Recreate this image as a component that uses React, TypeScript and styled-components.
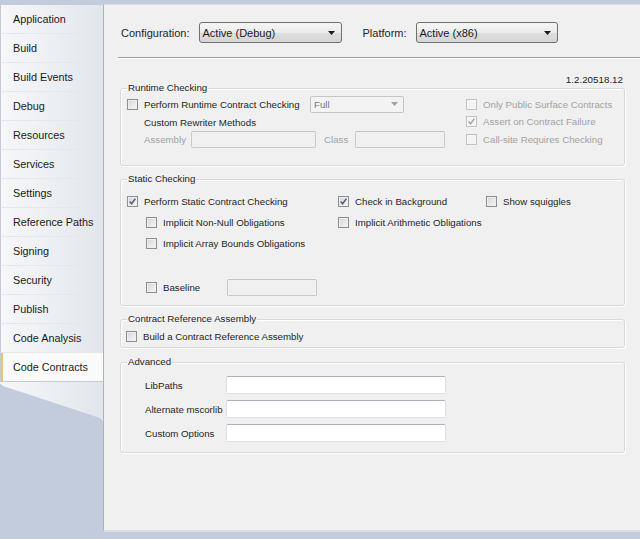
import React from "react";
import styled, { createGlobalStyle } from "styled-components";

const GlobalStyle = createGlobalStyle`
  html, body {
    margin: 0;
    padding: 0;
  }
  body {
    background: #c2ccdc;
    font-family: "Liberation Sans", Arial, sans-serif;
  }
`;

const Window = styled.div`
  width: 640px;
  height: 539px;
  box-sizing: border-box;
  padding-top: 4px;
  display: flex;
  align-items: flex-start;
  background: #c2ccdc;
  overflow: hidden;
`;

/* ---------- side tabs ---------- */

const Sidebar = styled.nav`
  width: 103px;
  flex-shrink: 0;
  padding-top: 1px;
  display: flex;
  flex-direction: column;
`;

const Tab = styled.div<{ $active?: boolean }>`
  height: 29px;
  box-sizing: border-box;
  display: flex;
  align-items: center;
  padding-left: 12px;
  font-size: 10.8px;
  color: #1a1a1a;
  border-left: 1px solid #c3cad4;
  border-bottom: 1px solid ${(p) => (p.$active ? "#c4cad3" : "#e4e7ec")};
  background: ${(p) =>
    p.$active ? "#fafafa" : "linear-gradient(to right, #f6f7f9, #e2e6ec)"};
  box-shadow: ${(p) => (p.$active ? "inset 2px 0 0 #f2c463" : "none")};
`;

const TabTail = styled.div`
  height: 40px;
  background: linear-gradient(to right, #f6f7f9, #e2e6ec);
  clip-path: polygon(0 0, 100% 0, 100% 100%, 98% 92%, 95% 88%, 3% 10%, 0 4%);
`;

/* ---------- property page ---------- */

const Panel = styled.main`
  flex: 1;
  height: 528px;
  box-sizing: border-box;
  background: #f0f0f0;
  border-left: 1px solid #a9b2bf;
  border-top: 1px solid #dde2e8;
  border-bottom: 2px solid #d9dee5;
  display: flex;
  flex-direction: column;
  color: #1e1e1e;
`;

const Header = styled.div`
  display: flex;
  align-items: center;
  height: 21px;
  margin: 17px 0 0 17px;
  font-size: 11px;
`;

const HeaderLabel = styled.span<{ $space?: number }>`
  margin-left: ${(p) => p.$space ?? 0}px;
  margin-right: 9px;
`;

const Combo = styled.div<{ $width: number }>`
  width: ${(p) => p.$width}px;
  height: 21px;
  box-sizing: border-box;
  border: 1px solid #707070;
  border-radius: 3px;
  background: linear-gradient(#f6f6f6, #ebebeb 50%, #dedede 51%, #d6d6d6);
  display: flex;
  align-items: center;
  justify-content: space-between;
  padding: 0 6px 0 3px;
  font-size: 11px;
  color: #1a1a1a;
`;

const Separator = styled.div`
  margin: 14px 0 0 14px;
  border-top: 1px solid #a0a0a0;
  border-bottom: 1px solid #ffffff;
`;

const Body = styled.div`
  padding: 0 15px 0 16px;
  display: flex;
  flex-direction: column;
  font-size: 9.7px;
`;

const Version = styled.div`
  margin-top: 15px;
  height: 12px;
  line-height: 12px;
  text-align: right;
  padding-right: 2px;
  font-size: 9.8px;
`;

const Group = styled.section<{ $top: number; $pad: string }>`
  position: relative;
  margin-top: ${(p) => p.$top}px;
  padding: ${(p) => p.$pad};
  border: 1px solid #d5d9de;
  border-radius: 3px;
  box-shadow: inset 1px 1px 0 #ffffff, 1px 1px 0 #ffffff;
`;

const Caption = styled.span`
  position: absolute;
  top: -7px;
  left: 6px;
  padding: 0 1px;
  line-height: 12px;
  background: #f0f0f0;
`;

const RuntimeGrid = styled.div`
  display: grid;
  grid-template-columns: 339px auto;
  grid-template-rows: 18px 17px 18px;
`;

const StaticGrid = styled.div`
  display: grid;
  grid-template-columns: 211px 148px auto;
  grid-template-rows: 21px 21px 21px 24px 21px;
`;

const Row = styled.div`
  display: flex;
  align-items: center;
  height: 18px;
`;

const Text = styled.span<{ $disabled?: boolean; $width?: number; $indent?: number }>`
  white-space: nowrap;
  color: ${(p) => (p.$disabled ? "#a2a2a2" : "#1e1e1e")};
  ${(p) => (p.$width ? `width: ${p.$width}px; flex-shrink: 0;` : "")}
  margin-left: ${(p) => p.$indent ?? 0}px;
`;

const Box = styled.span<{ $disabled?: boolean }>`
  width: 11px;
  height: 11px;
  box-sizing: border-box;
  flex-shrink: 0;
  border: 1px solid ${(p) => (p.$disabled ? "#c2c2c2" : "#8e8f8f")};
  background: ${(p) =>
    p.$disabled ? "#f3f3f3" : "linear-gradient(135deg, #d6d6d6, #f7f7f7)"};
  box-shadow: inset 0 0 0 1px ${(p) => (p.$disabled ? "#f7f7f7" : "#eeeeee")};
  display: flex;
  align-items: center;
  justify-content: center;
`;

const OptionRow = styled.label<{ $indent?: number; $width?: number }>`
  display: flex;
  align-items: center;
  gap: 6px;
  height: 100%;
  margin-left: ${(p) => p.$indent ?? 0}px;
  ${(p) => (p.$width ? `width: ${p.$width}px; flex-shrink: 0;` : "")}
`;

const TextBox = styled.div<{ $width: number; $disabled?: boolean }>`
  width: ${(p) => p.$width}px;
  height: ${(p) => (p.$disabled ? 17 : 18)}px;
  box-sizing: border-box;
  flex-shrink: 0;
  border: 1px solid ${(p) => (p.$disabled ? "#cacaca" : "#dde1e7")};
  border-top-color: ${(p) => (p.$disabled ? "#c4c4c4" : "#adb0b7")};
  border-radius: 2px;
  background: ${(p) => (p.$disabled ? "#f0f0f0" : "#ffffff")};
`;

const DisabledSelect = styled.div`
  width: 94px;
  height: 17px;
  box-sizing: border-box;
  border: 1px solid #c6c6c6;
  border-radius: 2px;
  background: #f3f3f3;
  display: flex;
  align-items: center;
  justify-content: space-between;
  padding: 0 5px 0 3px;
  color: #777777;
`;

const AdvancedList = styled.div`
  display: flex;
  flex-direction: column;
  gap: 6px;
`;

const Arrow: React.FC<{ color?: string }> = ({ color = "#1a1a1a" }) => (
  <svg width="7" height="4" viewBox="0 0 7 4">
    <polygon points="0,0 7,0 3.5,4" fill={color} />
  </svg>
);

const CheckBox: React.FC<{ checked?: boolean; disabled?: boolean }> = ({
  checked,
  disabled,
}) => (
  <Box $disabled={disabled}>
    {checked && (
      <svg width="9" height="9" viewBox="0 0 9 9">
        <path
          d="M1.6 4.6 L3.6 6.8 L7.4 1.6"
          fill="none"
          stroke={disabled ? "#a8a8a8" : "#4a5b8c"}
          strokeWidth="1.5"
        />
      </svg>
    )}
  </Box>
);

const Option: React.FC<{
  label: string;
  checked?: boolean;
  disabled?: boolean;
  indent?: number;
  width?: number;
}> = (props) => (
  <OptionRow $indent={props.indent} $width={props.width}>
    <CheckBox checked={props.checked} disabled={props.disabled} />
    <Text $disabled={props.disabled}>{props.label}</Text>
  </OptionRow>
);

const tabs = [
  "Application",
  "Build",
  "Build Events",
  "Debug",
  "Resources",
  "Services",
  "Settings",
  "Reference Paths",
  "Signing",
  "Security",
  "Publish",
  "Code Analysis",
  "Code Contracts",
];

const advanced = ["LibPaths", "Alternate mscorlib", "Custom Options"];

const App: React.FC = () => {
  return (
    <Window>
      <GlobalStyle />
      <Sidebar>
        {tabs.map((t) => (
          <Tab key={t} $active={t === "Code Contracts"}>
            {t}
          </Tab>
        ))}
        <TabTail />
      </Sidebar>

      <Panel>
        <Header>
          <HeaderLabel>Configuration:</HeaderLabel>
          <Combo $width={143}>
            <span>Active (Debug)</span>
            <Arrow />
          </Combo>
          <HeaderLabel $space={21}>Platform:</HeaderLabel>
          <Combo $width={142}>
            <span>Active (x86)</span>
            <Arrow />
          </Combo>
        </Header>
        <Separator />

        <Body>
          <Version>1.2.20518.12</Version>

          <Group $top={2} $pad="6px 0 17px 6px">
            <Caption>Runtime Checking</Caption>
            <RuntimeGrid>
              <Row>
                <Option label="Perform Runtime Contract Checking" width={183} />
                <DisabledSelect>
                  <span>Full</span>
                  <Arrow color="#a0a0a0" />
                </DisabledSelect>
              </Row>
              <Option label="Only Public Surface Contracts" disabled />
              <Row>
                <Text $indent={17}>Custom Rewriter Methods</Text>
              </Row>
              <Option label="Assert on Contract Failure" checked disabled />
              <Row>
                <Text $indent={17} $width={47} $disabled>
                  Assembly
                </Text>
                <TextBox $width={125} $disabled />
                <Text $indent={8} $width={31} $disabled>
                  Class
                </Text>
                <TextBox $width={90} $disabled />
              </Row>
              <Option label="Call-site Requires Checking" disabled />
            </RuntimeGrid>
          </Group>

          <Group $top={13} $pad="11px 0 6px 6px">
            <Caption>Static Checking</Caption>
            <StaticGrid>
              <Option label="Perform Static Contract Checking" checked />
              <Option label="Check in Background" checked />
              <Option label="Show squiggles" />

              <Option label="Implicit Non-Null Obligations" indent={19} />
              <Option label="Implicit Arithmetic Obligations" />
              <span />

              <Option label="Implicit Array Bounds Obligations" indent={19} />
              <span />
              <span />

              <span />
              <span />
              <span />

              <Row>
                <Option label="Baseline" indent={19} width={81} />
                <TextBox $width={90} $disabled />
              </Row>
            </StaticGrid>
          </Group>

          <Group $top={13} $pad="7px 0 2px 5px">
            <Caption>Contract Reference Assembly</Caption>
            <Row>
              <Option label="Build a Contract Reference Assembly" />
            </Row>
          </Group>

          <Group $top={14} $pad="13px 0 10px 24px">
            <Caption>Advanced</Caption>
            <AdvancedList>
              {advanced.map((a) => (
                <Row key={a}>
                  <Text $width={81}>{a}</Text>
                  <TextBox $width={220} />
                </Row>
              ))}
            </AdvancedList>
          </Group>
        </Body>
      </Panel>
    </Window>
  );
};

export default App;
